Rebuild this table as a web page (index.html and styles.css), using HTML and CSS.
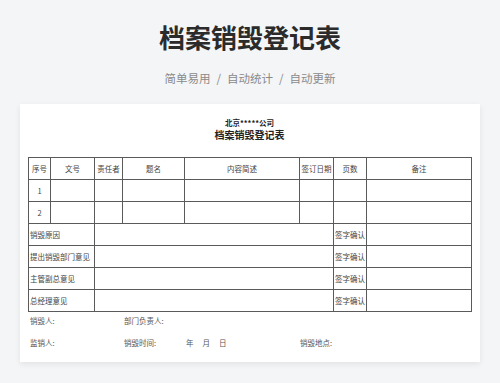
FILE: index.html
```html
<!DOCTYPE html>
<html lang="zh-CN">
<head>
<meta charset="utf-8">
<link rel="stylesheet" href="styles.css">
</head>
<body>
<div class="page">
  <h1 class="title">档案销毁登记表</h1>
  <p class="subtitle"><span>简单易用</span><span class="sep">/</span><span>自动统计</span><span class="sep">/</span><span>自动更新</span></p>
  <div class="card">
    <div class="company">北京*****公司</div>
    <div class="doc-title">档案销毁登记表</div>
    <table class="form">
      <colgroup>
        <col class="c1"><col class="c2"><col class="c3"><col class="c4"><col class="c5"><col class="c6"><col class="c7"><col class="c8">
      </colgroup>
      <tr class="head">
        <td>序号</td><td>文号</td><td>责任者</td><td>题名</td><td>内容简述</td><td>签订日期</td><td>页数</td><td>备注</td>
      </tr>
      <tr>
        <td class="center">1</td><td></td><td></td><td></td><td></td><td></td><td></td><td></td>
      </tr>
      <tr>
        <td class="center">2</td><td></td><td></td><td></td><td></td><td></td><td></td><td></td>
      </tr>
      <tr>
        <td colspan="2" class="label">销毁原因</td><td colspan="4"></td><td class="label">签字确认</td><td></td>
      </tr>
      <tr>
        <td colspan="2" class="label">提出销毁部门意见</td><td colspan="4"></td><td class="label">签字确认</td><td></td>
      </tr>
      <tr>
        <td colspan="2" class="label">主管副总意见</td><td colspan="4"></td><td class="label">签字确认</td><td></td>
      </tr>
      <tr>
        <td colspan="2" class="label">总经理意见</td><td colspan="4"></td><td class="label">签字确认</td><td></td>
      </tr>
    </table>
    <div class="footer">
      <span>销毁人:</span><span>部门负责人:</span><span></span>
      <span>监销人:</span><span class="time">销毁时间:<span class="ymd">年</span><span class="ymd">月</span><span class="ymd">日</span></span><span>销毁地点:</span>
    </div>
  </div>
</div>
</body>
</html>
```

FILE: styles.css
```css
html, body {
  margin: 0;
  padding: 0;
}
body {
  background: #f4f5f7;
  font-family: "Noto Sans CJK SC", "Noto Sans", sans-serif;
  width: 500px;
  height: 383px;
  overflow: hidden;
}
.page {
  padding-top: 22px;
  display: flex;
  flex-direction: column;
  align-items: center;
}
.title {
  margin: 0;
  font-size: 26px;
  line-height: 30px;
  font-weight: 700;
  color: #2b2b2b;
}
.subtitle {
  margin: 18px 0 0;
  font-size: 11.5px;
  line-height: 16px;
  color: #8a8a8a;
  display: flex;
}
.sep {
  margin: 0 6px;
}
.card {
  margin-top: 18px;
  width: 460px;
  box-sizing: border-box;
  background: #fff;
  box-shadow: 0 2px 6px rgba(0, 0, 0, 0.08);
  padding: 14px 9px 13px 8px;
  display: flex;
  flex-direction: column;
}
.company {
  text-align: center;
  font-size: 7.5px;
  line-height: 10px;
  font-weight: 700;
  color: #222;
}
.doc-title {
  margin-top: 1px;
  text-align: center;
  font-size: 10px;
  line-height: 12px;
  font-weight: 700;
  color: #222;
}
.form {
  margin-top: 16px;
  width: 443px;
  border-collapse: collapse;
  table-layout: fixed;
  font-size: 7.5px;
  color: #444;
}
.c1 { width: 22px; }
.c2 { width: 44px; }
.c3 { width: 28px; }
.c4 { width: 62px; }
.c5 { width: 115px; }
.c6 { width: 34px; }
.c7 { width: 33px; }
.c8 { width: 105px; }
.form td {
  border: 1px solid #5a5a5a;
  height: 21px;
  padding: 0;
  line-height: 10px;
  white-space: nowrap;
  overflow: hidden;
}
.head td,
.form td.center {
  text-align: center;
}
.form td.label {
  text-align: left;
  padding-left: 1px;
}
.footer {
  margin-top: 3px;
  padding-left: 2px;
  display: grid;
  grid-template-columns: 94px 176px 1fr;
  row-gap: 10px;
  font-size: 7.5px;
  line-height: 12px;
  color: #555;
}
.time {
  display: flex;
}
.ymd {
  margin-left: 9px;
}
.time .ymd:first-child {
  margin-left: 30px;
}
```
